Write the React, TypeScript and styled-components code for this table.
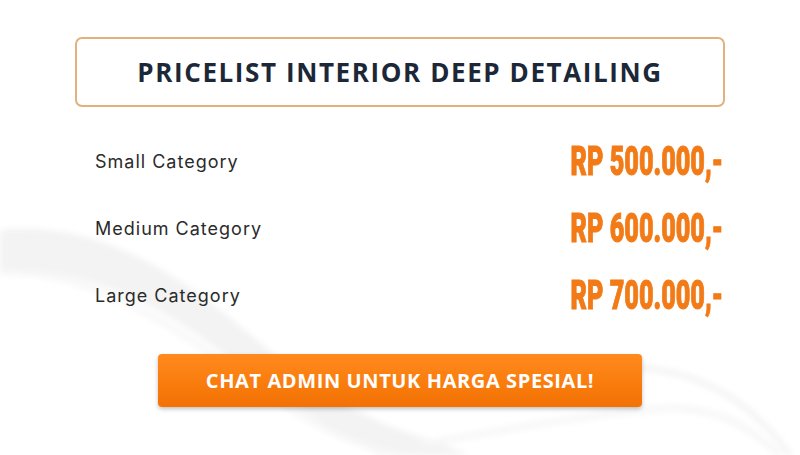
import React from "react";
import styled, { createGlobalStyle } from "styled-components";

const Global = createGlobalStyle`
  html, body { margin: 0; padding: 0; background: #ffffff; }
  body { width: 800px; height: 455px; overflow: hidden; }
`;

const Page = styled.div`
  position: relative;
  width: 800px;
  height: 455px;
  overflow: hidden;
  background: #ffffff;
  font-family: "Open Sans", "Noto Sans", sans-serif;
`;

const Waves = styled.svg`
  position: absolute;
  inset: 0;
  z-index: 0;
`;

const Content = styled.div`
  position: relative;
  z-index: 1;
  display: flex;
  flex-direction: column;
  align-items: center;
  padding-top: 37px;
`;

const TitleBox = styled.div`
  box-sizing: border-box;
  width: 650px;
  height: 70px;
  border: 2px solid #e2b27e;
  border-radius: 7px;
  background: #ffffff;
  display: flex;
  align-items: center;
  justify-content: center;
`;

const Title = styled.h1`
  margin: 0;
  font-family: "Open Sans", "Noto Sans", sans-serif;
  font-weight: 700;
  font-size: 26px;
  color: #1c2838;
  letter-spacing: 1.6px;
`;

const List = styled.div`
  box-sizing: border-box;
  width: 628px;
  margin-top: 21px;
  margin-left: 18px;
  display: flex;
  flex-direction: column;
`;

const Row = styled.div`
  height: 67px;
  display: flex;
  align-items: center;
  justify-content: space-between;
`;

const Label = styled.span`
  font-family: "Inter", "Noto Sans", sans-serif;
  font-weight: 400;
  font-size: 18px;
  letter-spacing: 1px;
  color: #2b2b2b;
`;

const Price = styled.span`
  display: inline-block;
  font-family: "Roboto", "Liberation Sans", sans-serif;
  font-weight: 900;
  font-size: 40px;
  color: #f27b17;
  -webkit-text-stroke: 1px #f27b17;
  transform: scaleX(0.63);
  transform-origin: right center;
  white-space: nowrap;
`;

const Button = styled.button`
  margin-top: 25px;
  width: 484px;
  height: 53px;
  border: none;
  border-radius: 4px;
  background: linear-gradient(180deg, #ff8a1e 0%, #f97b0c 60%, #f27205 100%);
  box-shadow: 0 2px 4px rgba(0, 0, 0, 0.25);
  color: #ffffff;
  font-family: "Open Sans", "Noto Sans", sans-serif;
  font-weight: 700;
  font-size: 20px;
  letter-spacing: 0.6px;
  cursor: pointer;
`;

const rows = [
  { label: "Small Category", price: "RP 500.000,-" },
  { label: "Medium Category", price: "RP 600.000,-" },
  { label: "Large Category", price: "RP 700.000,-" },
];

export default function App() {
  return (
    <Page>
      <Global />
      <Waves width="800" height="455" viewBox="0 0 800 455">
        <defs>
          <filter id="soft" x="-10%" y="-10%" width="120%" height="120%">
            <feGaussianBlur stdDeviation="3" />
          </filter>
        </defs>
        <g filter="url(#soft)">
          <path
            d="M0 230 C 80 222, 150 255, 220 310 S 330 410, 430 440 L 470 455 L 380 455 C 320 430, 250 370, 190 330 S 70 268, 0 270 Z"
            fill="#f3f3f3"
          />
          <path d="M0 272 C 80 270, 150 310, 220 360 S 330 440, 400 455" fill="none" stroke="#f7f7f7" strokeWidth="6" />
          <path d="M640 368 C 700 372, 750 400, 790 455" fill="none" stroke="#f2f2f2" strokeWidth="5" />
          <path d="M420 445 C 500 430, 570 418, 640 410 S 740 420, 780 455" fill="none" stroke="#f6f6f6" strokeWidth="6" />
        </g>
      </Waves>
      <Content>
        <TitleBox>
          <Title>PRICELIST INTERIOR DEEP DETAILING</Title>
        </TitleBox>
        <List>
          {rows.map((r) => (
            <Row key={r.label}>
              <Label>{r.label}</Label>
              <Price>{r.price}</Price>
            </Row>
          ))}
        </List>
        <Button>CHAT ADMIN UNTUK HARGA SPESIAL!</Button>
      </Content>
    </Page>
  );
}
